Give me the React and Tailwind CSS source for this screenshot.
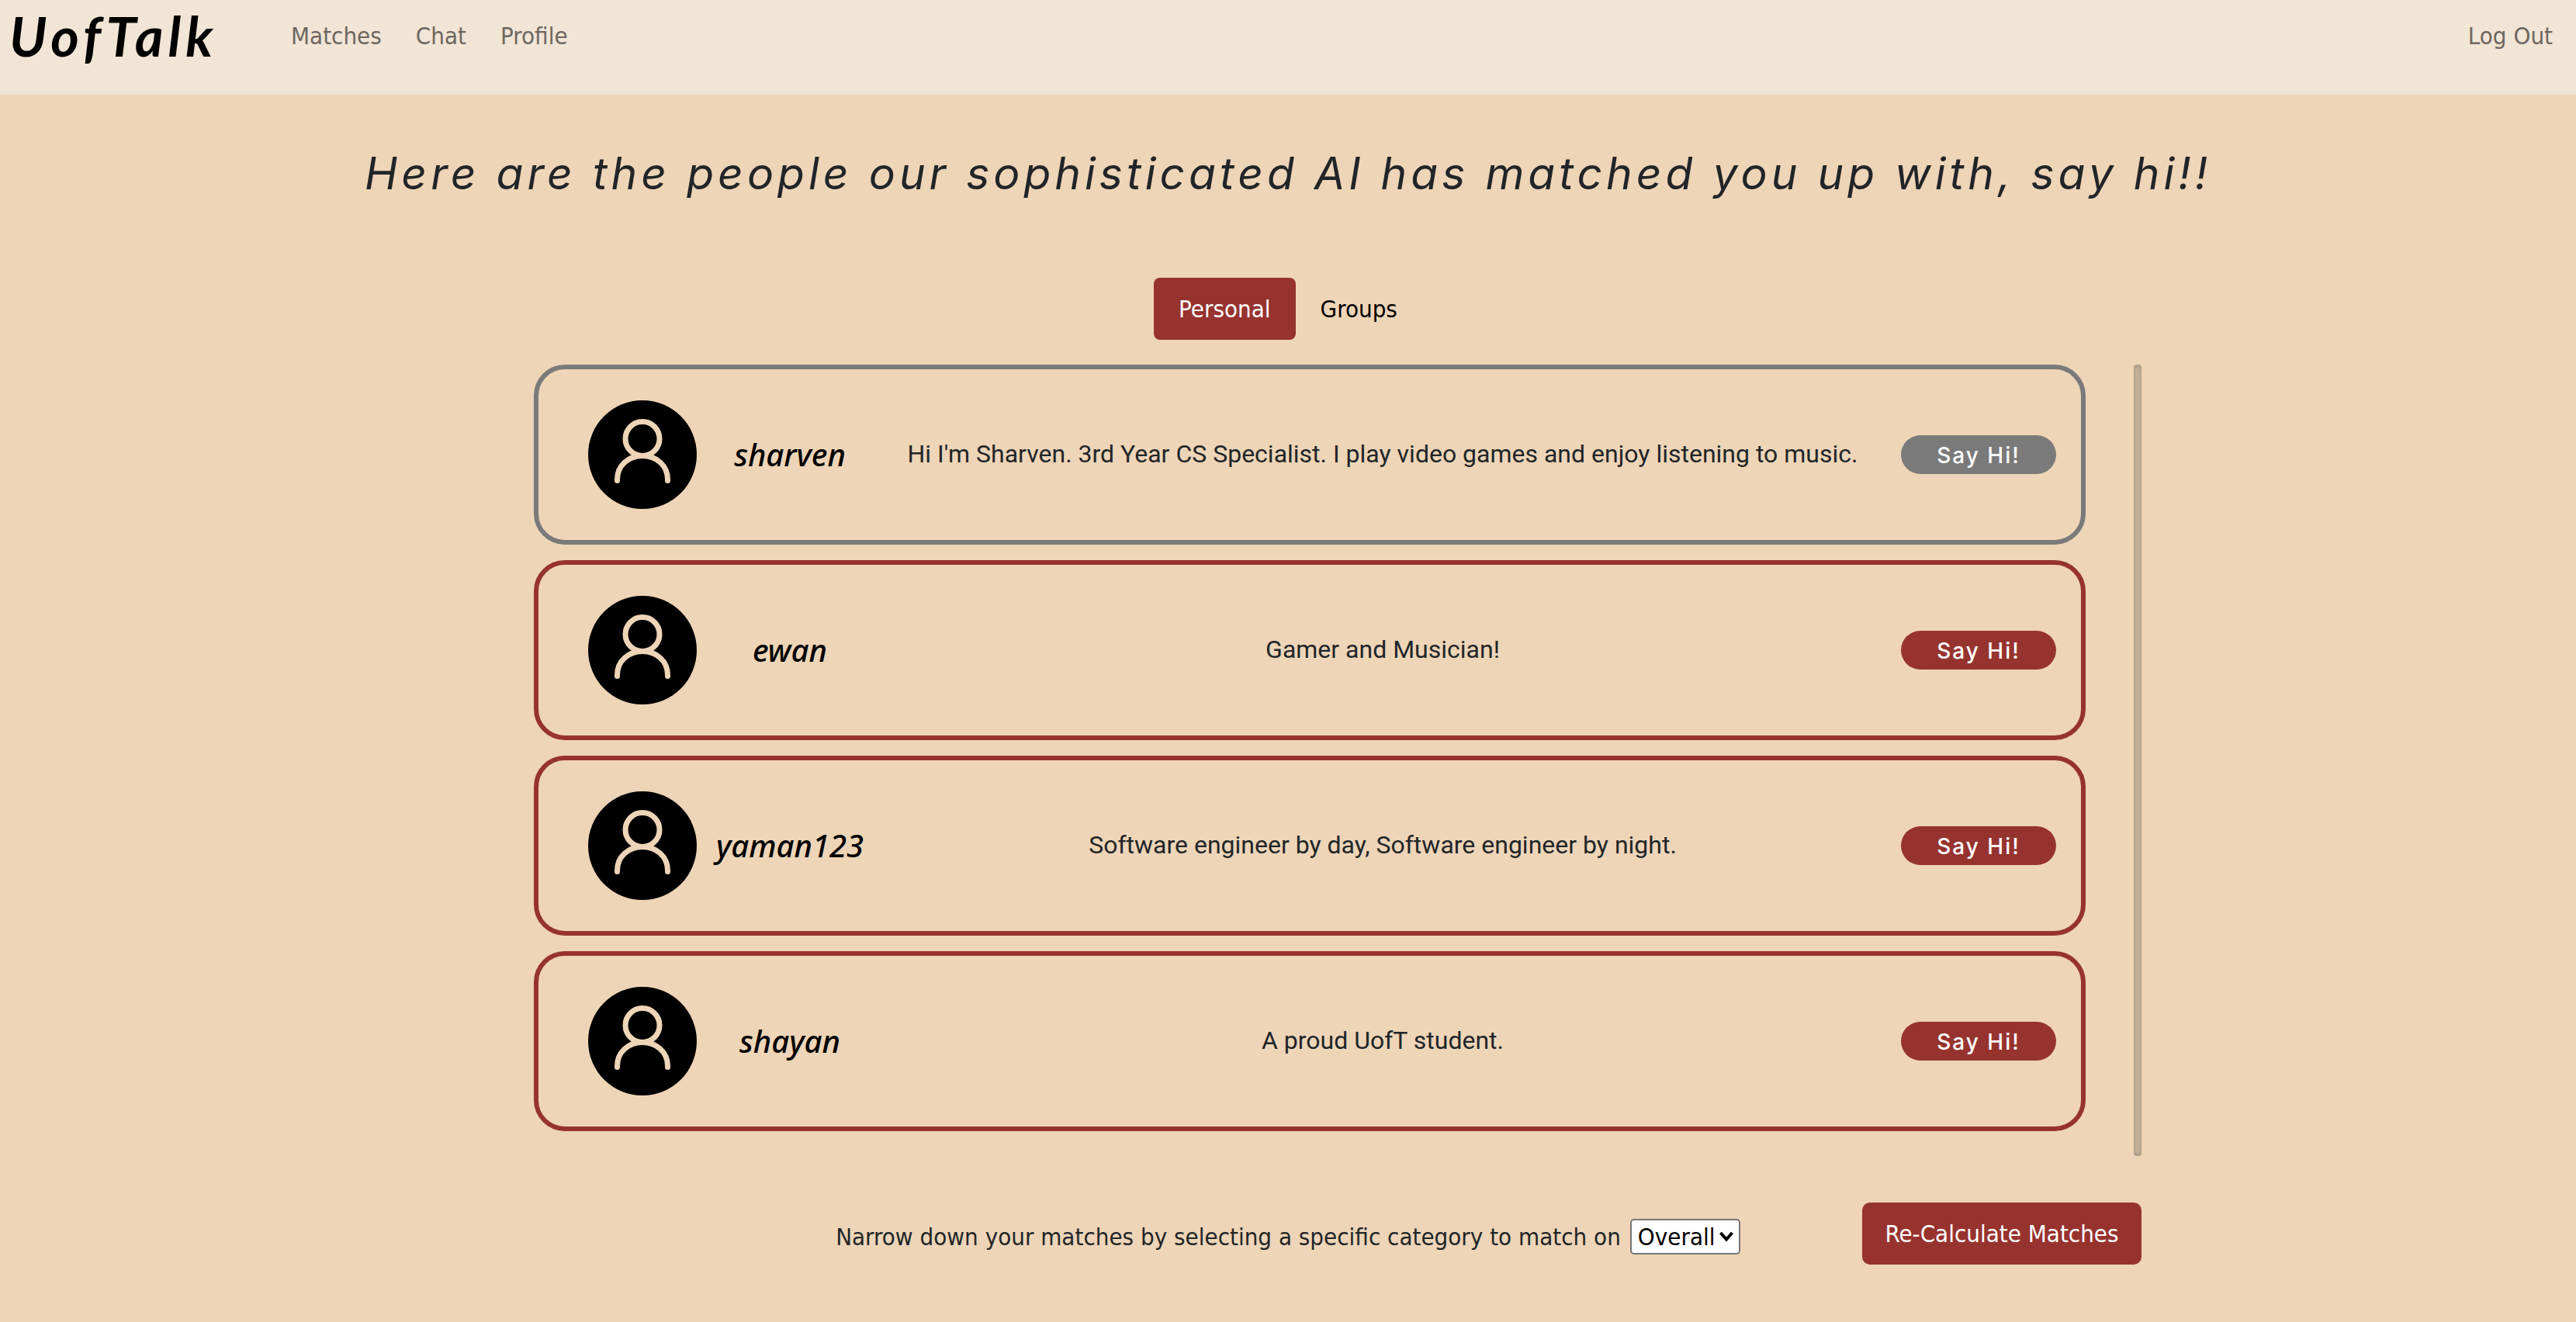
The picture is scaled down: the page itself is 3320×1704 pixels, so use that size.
const people = [
  { name: "sharven", bio: "Hi I'm Sharven. 3rd Year CS Specialist. I play video games and enjoy listening to music.", greeted: true },
  { name: "ewan", bio: "Gamer and Musician!", greeted: false },
  { name: "yaman123", bio: "Software engineer by day, Software engineer by night.", greeted: false },
  { name: "shayan", bio: "A proud UofT student.", greeted: false },
];

function Avatar() {
  return (
    <svg viewBox="0 0 140 140" className="size-35 shrink-0" aria-hidden="true">
      <circle cx="70" cy="70" r="70" fill="#000" />
      <g fill="none" stroke="#eed5b7" strokeWidth="7" strokeLinecap="round">
        <circle cx="70" cy="49.5" r="22" />
        <path d="M37.5 103.5 V102 C37.5 84 52 71.5 70 71.5 S102.5 84 102.5 102 V103.5" />
      </g>
    </svg>
  );
}

function MatchCard({ name, bio, greeted }) {
  return (
    <li
      className={
        "flex items-center rounded-[40px] border-6 py-10 pr-8 pl-16 " +
        (greeted ? "border-[#7a7a7a]" : "border-[#97332f]")
      }
    >
      <Avatar />
      <h2 className="w-60 shrink-0 text-center font-['Noto_Sans','Open_Sans',sans-serif] text-[40px] leading-12 font-medium text-black italic">
        {name}
      </h2>
      <p className="flex-1 pr-6 pb-0.5 text-center font-['Roboto',sans-serif] text-[32px] leading-12">{bio}</p>
      <button
        type="button"
        className={
          "h-[50px] w-50 shrink-0 rounded-full pt-0.5 font-['Inter',sans-serif] text-[28px] leading-12 font-medium tracking-[2px] text-white " +
          (greeted ? "bg-[#7a7a7a]" : "bg-[#97332f]")
        }
      >
        Say Hi!
      </button>
    </li>
  );
}

export default function App() {
  return (
    <div className="min-h-screen bg-[#eed5b7] font-['DejaVu_Sans_Condensed','Open_Sans',sans-serif] text-[31px] leading-12 text-[#212529]">
      <header className="flex h-[122px] items-start bg-[#f1e5d5] px-3 text-[#6d6760]">
        <a href="#home" className="w-[363px] font-['Lato',sans-serif] text-[70px] leading-23 font-bold tracking-[6px] text-black italic">
          UofTalk
        </a>
        <nav className="flex flex-1 gap-11 pt-[22px]">
          <a href="#matches">Matches</a>
          <a href="#chat">Chat</a>
          <a href="#profile">Profile</a>
        </nav>
        <a href="#logout" className="pt-[22px] pr-[18px]">Log Out</a>
      </header>

      <main className="px-8">
        <h1 className="pt-[62px] text-center font-['Inter',sans-serif] text-[57px] leading-20 tracking-[5px] italic">
          Here are the people our sophisticated AI has matched you up with, say hi!!
        </h1>

        <div className="mx-auto w-full max-w-[2200px]">
          <div role="tablist" className="mt-[94px] flex justify-center">
            <button type="button" role="tab" aria-selected="true" className="h-20 rounded-lg bg-[#97332f] px-8 text-white">
              Personal
            </button>
            <button type="button" role="tab" aria-selected="false" className="h-20 px-8 text-black">
              Groups
            </button>
          </div>

          <div className="mt-8 flex h-[1020px] justify-between pl-32">
            <ul className="mr-[62px] flex flex-1 flex-col gap-5">
              {people.map((p) => (
                <MatchCard key={p.name} {...p} />
              ))}
            </ul>
            <div className="w-2.5 rounded-[4px] bg-[#c9b69e] shadow-[inset_0_0_6px_rgba(0,0,0,0.25)]" />
          </div>

          <div className="mt-15 grid grid-cols-[1fr_auto_1fr] items-start">
            <div className="col-start-2 flex items-center gap-3 pt-5">
              <label htmlFor="category">Narrow down your matches by selecting a specific category to match on</label>
              <div className="relative">
                <select
                  id="category"
                  className="block h-[46px] w-[142px] appearance-none rounded-[5px] border-2 border-[#767676] bg-white pl-2 leading-10 text-black"
                >
                  <option>Overall</option>
                </select>
                <svg viewBox="0 0 20 14" className="pointer-events-none absolute top-4 right-2 h-3.5 w-5" aria-hidden="true">
                  <path d="M2.5 2 L10 10.5 L17.5 2" fill="none" stroke="#000" strokeWidth="4" />
                </svg>
              </div>
            </div>
            <button type="button" className="h-20 w-90 justify-self-end rounded-[10px] bg-[#97332f] text-white">
              Re-Calculate Matches
            </button>
          </div>
        </div>
      </main>
    </div>
  );
}
